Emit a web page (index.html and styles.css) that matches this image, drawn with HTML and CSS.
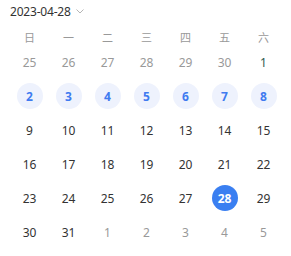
FILE: index.html
```html
<!DOCTYPE html>
<html lang="zh-CN">
<head>
    <meta charset="UTF-8">
    <meta name="viewport" content="width=device-width, initial-scale=1.0">
    <title>日历</title>
    <link rel="stylesheet" href="styles.css">
</head>
<body>
    <div class="calendar">
        <div class="cal-header">
            <span class="cal-title">2023-04-28</span>
            <svg class="cal-arrow" width="8" height="5" viewBox="0 0 8 5"><path d="M0.5 0.5 L4 4 L7.5 0.5" fill="none" stroke="#b5b5b5" stroke-width="1"/></svg>
        </div>

        <div class="cal-grid">
            <span class="week">日</span><span class="week">一</span><span class="week">二</span><span class="week">三</span><span class="week">四</span><span class="week">五</span><span class="week">六</span>

            <span class="day other">25</span><span class="day other">26</span><span class="day other">27</span><span class="day other">28</span><span class="day other">29</span><span class="day other">30</span><span class="day next-dark">1</span>

            <span class="day"><i class="mark">2</i></span><span class="day"><i class="mark">3</i></span><span class="day"><i class="mark">4</i></span><span class="day"><i class="mark">5</i></span><span class="day"><i class="mark">6</i></span><span class="day"><i class="mark">7</i></span><span class="day"><i class="mark">8</i></span>

            <span class="day">9</span><span class="day">10</span><span class="day">11</span><span class="day">12</span><span class="day">13</span><span class="day">14</span><span class="day">15</span>

            <span class="day">16</span><span class="day">17</span><span class="day">18</span><span class="day">19</span><span class="day">20</span><span class="day">21</span><span class="day">22</span>

            <span class="day">23</span><span class="day">24</span><span class="day">25</span><span class="day">26</span><span class="day">27</span><span class="day"><i class="selected">28</i></span><span class="day">29</span>

            <span class="day">30</span><span class="day">31</span><span class="day other">1</span><span class="day other">2</span><span class="day other">3</span><span class="day other">4</span><span class="day other">5</span>
        </div>
    </div>
</body>
</html>
```

FILE: styles.css
```css
body {
    margin: 0;
    background-color: white;
    font-family: 'Noto Sans', 'Noto Sans CJK SC', sans-serif;
    color: #333;
}

.calendar {
    width: 291px;
    padding-top: 1px;
}

.cal-header {
    display: flex;
    align-items: center;
    gap: 5px;
    height: 20px;
    padding-left: 10px;
    margin-bottom: 8px;
}

.cal-title {
    font-size: 12px;
    letter-spacing: -0.2px;
    color: #333;
}

.cal-arrow {
    margin-top: 1px;
}

.cal-grid {
    display: grid;
    grid-template-columns: repeat(7, 39px);
    grid-auto-rows: 34px;
    grid-template-rows: 16px;
    padding-left: 10px;
}

.week {
    display: flex;
    align-items: center;
    justify-content: center;
    font-size: 11px;
    color: #999;
}

.day {
    display: flex;
    align-items: center;
    justify-content: center;
    font-size: 12px;
    color: #333;
}

.day.other {
    color: #999;
}

.day.next-dark {
    color: #2e5a50;
}

.mark, .selected {
    display: flex;
    align-items: center;
    justify-content: center;
    width: 26px;
    height: 26px;
    border-radius: 50%;
    font-style: normal;
    font-weight: bold;
}

.mark {
    background-color: #eef2fd;
    color: #3f7bf0;
}

.selected {
    background-color: #3a7ff1;
    color: white;
}
```
